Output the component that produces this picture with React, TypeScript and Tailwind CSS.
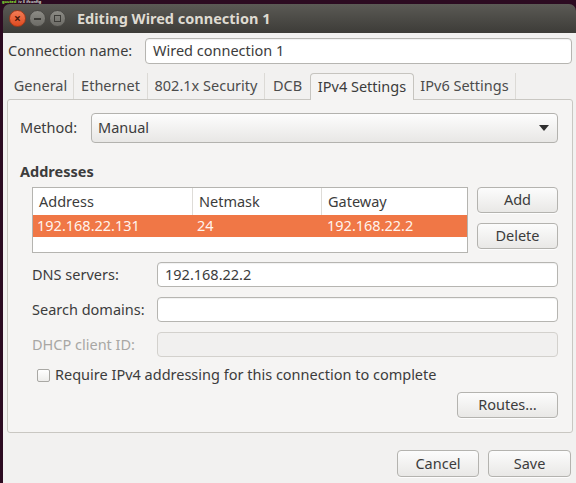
import { useState } from "react"

const font = { fontFamily: '"Noto Sans", "DejaVu Sans", sans-serif' }

function Btn({ children, className = "" }: { children: React.ReactNode; className?: string }) {
    return (
        <button className={`flex items-center justify-center rounded-[4px] border border-[#b4b3af] bg-gradient-to-b from-[#fcfcfc] to-[#e9e8e6] text-[14.5px] text-[#3c3c3c] shadow-[0_1px_0_rgba(255,255,255,0.8)] ${className}`}>
            {children}
        </button>
    )
}

function Field({ value = "", disabled = false }: { value?: string; disabled?: boolean }) {
    return (
        <div
            className={`flex h-[25px] flex-1 items-center rounded-[4px] border px-[7px] text-[14.5px] text-[#3c3c3c] ${
                disabled
                    ? "border-[#d3d1cd] bg-[#f1f0ef]"
                    : "border-[#b6b5b1] bg-white shadow-[inset_0_1px_1px_rgba(0,0,0,0.06)]"
            }`}
        >
            {value}
        </div>
    )
}

const tabs = [
    { label: "General", w: "w-[66px]" },
    { label: "Ethernet", w: "w-[74px]" },
    { label: "802.1x Security", w: "w-[117px]" },
    { label: "DCB", w: "w-[45px]" },
    { label: "IPv4 Settings", w: "w-[104px]" },
    { label: "IPv6 Settings", w: "w-[102px]" },
]

export default function App() {
    const [active] = useState(4)
    const [required, setRequired] = useState(false)

    return (
        <div className="flex h-[483px] w-[576px] flex-col overflow-hidden bg-[#2c0b21]" style={font}>
            {/* terminal behind the window, only its last line peeks out */}
            <div className="flex h-[4px] items-center whitespace-nowrap pl-[2px] font-bold text-[4px] leading-[4px]">
                <span className="text-[#8ae234]">gouted</span>
                <span className="ml-[2px] text-[#d3d7cf]">iv $ ifconfig</span>
            </div>

            <div className="ml-[3px] flex flex-1 flex-col overflow-hidden rounded-t-[7px]">
                {/* title bar */}
                <div className="flex h-[29px] shrink-0 items-center bg-gradient-to-b from-[#5b5a55] to-[#3d3c38] pl-[6px]">
                    <div className="flex items-center gap-[3px]">
                        <div className="flex h-[17px] w-[17px] items-center justify-center rounded-full border border-[#9e3a1c] bg-gradient-to-b from-[#f37c55] to-[#df4a1e] text-[12px] font-bold leading-none text-[#4a1a0c]">
                            ×
                        </div>
                        <div className="flex h-[17px] w-[17px] items-center justify-center rounded-full border border-[#4a4945] bg-gradient-to-b from-[#8c8b85] to-[#6c6b66]">
                            <div className="h-[2px] w-[7px] bg-[#3c3b37]" />
                        </div>
                        <div className="flex h-[17px] w-[17px] items-center justify-center rounded-full border border-[#4a4945] bg-gradient-to-b from-[#8c8b85] to-[#6c6b66]">
                            <div className="h-[7px] w-[7px] border border-[#3c3b37]" />
                        </div>
                    </div>
                    <span className="ml-[11px] text-[14.5px] font-bold text-[#dfdbd2]">Editing Wired connection 1</span>
                </div>

                {/* body */}
                <div className="flex flex-1 flex-col bg-[#f2f1f0] pl-[4px] pr-[3px] pt-[5px]">
                    <div className="flex items-center pr-[1px]">
                        <span className="w-[138px] pl-[1px] text-[14.5px] text-[#3c3c3c]">Connection name:</span>
                        <div className="flex h-[26px] flex-1 items-center rounded-[4px] border border-[#b6b5b1] bg-white px-[7px] text-[14.5px] text-[#3c3c3c] shadow-[inset_0_1px_1px_rgba(0,0,0,0.06)]">
                            Wired connection 1
                        </div>
                    </div>

                    {/* tabs */}
                    <div className="mt-[9px] flex h-[26px] items-stretch pl-[1px]">
                        {tabs.map((t, i) =>
                            i === active ? (
                                <div
                                    key={t.label}
                                    className={`${t.w} relative z-10 -mb-[1px] flex items-center justify-center rounded-t-[4px] border border-b-0 border-[#c6c4bf] bg-[#f5f4f3] text-[14.5px] text-[#3c3c3c]`}
                                >
                                    {t.label}
                                </div>
                            ) : (
                                <div
                                    key={t.label}
                                    className={`${t.w} flex items-center justify-center border-r border-[#dcdad6] text-[14.5px] text-[#4c4c4c] ${
                                        i === active - 1 ? "border-r-0" : ""
                                    }`}
                                >
                                    {t.label}
                                </div>
                            )
                        )}
                    </div>

                    {/* notebook page */}
                    <div className="flex flex-col rounded-[3px] border border-[#c9c7c2] bg-[#f5f4f3] pb-[14px] pl-[12px] pr-[14px] pt-[13px]">
                        <div className="flex items-center">
                            <span className="w-[71px] text-[14.5px] text-[#3c3c3c]">Method:</span>
                            <div className="flex h-[30px] flex-1 items-center justify-between rounded-[4px] border border-[#b3b2ae] bg-gradient-to-b from-[#fdfdfd] to-[#e8e7e5] pl-[6px] pr-[8px] text-[14.5px] text-[#3c3c3c]">
                                <span>Manual</span>
                                <svg width="10" height="6" viewBox="0 0 10 6">
                                    <path d="M0 0 L10 0 L5 6 Z" fill="#2f2f2f" />
                                </svg>
                            </div>
                        </div>

                        <div className="mt-[19px] flex h-[20px] items-center text-[14.5px] font-bold text-[#3c3c3c]">Addresses</div>

                        <div className="ml-[12px] mt-[5px] flex gap-[9px]">
                            <div className="flex h-[66px] w-[436px] flex-col border border-[#b5b4b0] bg-white text-[14.5px]">
                                <div className="flex h-[27px] items-center text-[#3c3c3c]">
                                    <div className="flex h-full w-[160px] items-center border-r border-[#dedcd8] pl-[6px]">Address</div>
                                    <div className="flex h-full w-[129px] items-center border-r border-[#dedcd8] pl-[6px]">Netmask</div>
                                    <div className="flex h-full flex-1 items-center pl-[6px]">Gateway</div>
                                </div>
                                <div className="flex h-[22px] items-center bg-[#f07746] text-[#fff4ee]">
                                    <div className="w-[160px] pl-[4px]">192.168.22.131</div>
                                    <div className="w-[129px] pl-[4px]">24</div>
                                    <div className="flex-1 pl-[5px]">192.168.22.2</div>
                                </div>
                            </div>
                            <div className="flex flex-col gap-[10px]">
                                <Btn className="h-[26px] w-[81px]">Add</Btn>
                                <Btn className="h-[26px] w-[81px]">Delete</Btn>
                            </div>
                        </div>

                        <div className="ml-[12px] mt-[9px] flex flex-col gap-[10px]">
                            <div className="flex items-center">
                                <span className="w-[125px] text-[14.5px] text-[#3c3c3c]">DNS servers:</span>
                                <Field value="192.168.22.2" />
                            </div>
                            <div className="flex items-center">
                                <span className="w-[125px] text-[14.5px] text-[#3c3c3c]">Search domains:</span>
                                <Field />
                            </div>
                            <div className="flex items-center">
                                <span className="w-[125px] text-[14.5px] text-[#a8a7a4]">DHCP client ID:</span>
                                <Field disabled />
                            </div>
                        </div>

                        <label className="ml-[17px] mt-[8px] flex h-[20px] cursor-pointer items-center gap-[5px] text-[14.5px] text-[#3c3c3c]">
                            <span
                                onClick={() => setRequired(!required)}
                                className="flex h-[13px] w-[13px] items-center justify-center rounded-[2px] border border-[#a9a8a4] bg-gradient-to-b from-white to-[#eeedeb] text-[10px] leading-none"
                            >
                                {required ? "✓" : ""}
                            </span>
                            Require IPv4 addressing for this connection to complete
                        </label>

                        <div className="mt-[7px] flex justify-end">
                            <Btn className="h-[26px] w-[101px]">Routes…</Btn>
                        </div>
                    </div>

                    <div className="mr-[2px] mt-[17px] flex justify-end gap-[9px]">
                        <Btn className="h-[27px] w-[82px]">Cancel</Btn>
                        <Btn className="h-[27px] w-[83px]">Save</Btn>
                    </div>
                </div>
            </div>
        </div>
    )
}
